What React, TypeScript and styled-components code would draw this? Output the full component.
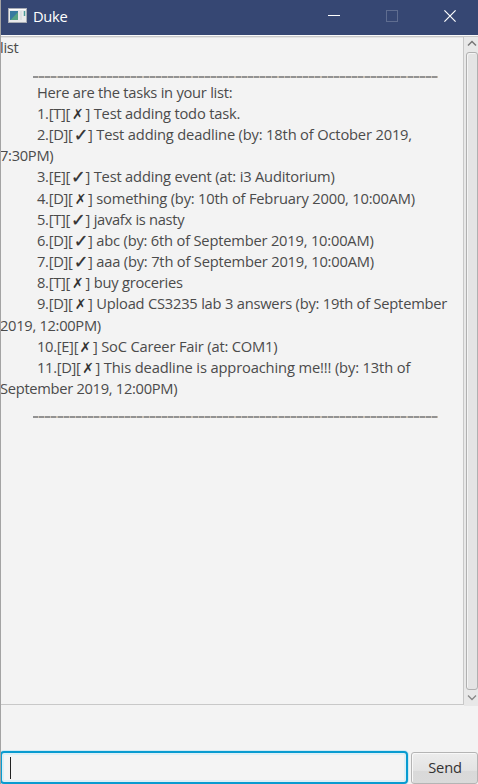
import React from 'react';
import styled, { createGlobalStyle } from 'styled-components';

const GlobalStyle = createGlobalStyle`
  * { box-sizing: border-box; }
  body { margin: 0; background: #f3f3f3; font-family: "Open Sans", "Noto Sans", sans-serif; }
`;

const Window = styled.div`
  width: 478px;
  height: 784px;
  display: flex;
  flex-direction: column;
  overflow: hidden;
  background: #f3f3f3;
  border-left: 1px solid #a3a3a3;
`;

const TitleBar = styled.header`
  height: 35px;
  flex: none;
  display: flex;
  align-items: center;
  margin-left: -1px;
  margin-right: -1px;
  padding-left: 8px;
  background: #364773;
  color: #fff;
`;

const AppIcon = styled.svg`
  flex: none;
  margin-bottom: 3px;
`;

const Title = styled.h1`
  flex: 1;
  margin: 0 0 0 6px;
  padding-bottom: 3px;
  font-size: 14.7px;
  font-weight: 400;
  line-height: 20px;
  letter-spacing: -0.3px;
`;

const WindowButton = styled.button<{ $dim?: boolean }>`
  width: 58px;
  height: 32px;
  margin-bottom: 3px;
  padding: 0;
  display: flex;
  align-items: center;
  justify-content: center;
  border: 0;
  background: none;
  color: ${p => (p.$dim ? '#5f6d90' : '#fff')};
`;

const ScrollPane = styled.main`
  height: 671px;
  flex: none;
  display: flex;
  border-top: 1px solid #fafafa;
`;

const Viewport = styled.div`
  flex: 1;
  min-width: 0;
  border: solid #c8c8c8;
  border-width: 1px 1px 1px 0;
  margin-bottom: 1px;
  box-shadow: inset 0 1px #e4e4e4;
`;

const ScrollBar = styled.div`
  width: 14px;
  flex: none;
  display: flex;
  flex-direction: column;
  align-items: flex-end;
  border-top: 1px solid #c8c8c8;
  background: #e8e8e8;
`;

const Arrow = styled.svg`
  flex: none;
  display: block;
`;

const Thumb = styled.div`
  width: 12px;
  height: 638px;
  border: 1px solid #b0b0b0;
  border-radius: 3px;
  background: #e4e4e4;
  box-shadow: inset 1px 1px #f4f4f4;
`;

const Line = styled.div<{ $track?: number; $indent?: boolean }>`
  height: 21.2px;
  display: flex;
  margin-left: -1px;
  padding-left: ${p => (p.$indent ? 37 : 0)}px;
  font-size: 14.7px;
  line-height: 21.2px;
  letter-spacing: ${p => p.$track ?? -0.3}px;
  white-space: pre;
  color: #4b4b4b;
`;

const Command = styled(Line)`
  margin-top: 0.3px;
`;

const Tag = styled.span<{ $width: number }>`
  width: ${p => p.$width}px;
  letter-spacing: -0.3px;
`;

const Mark = styled.span<{ $done?: boolean }>`
  width: 15px;
  display: flex;
  justify-content: center;
  margin-left: ${p => (p.$done ? -0.5 : -1)}px;
  margin-right: ${p => (p.$done ? 0.5 : 1)}px;
  padding-top: 1px;
  font-family: "DejaVu Sans", sans-serif;
  font-size: ${p => (p.$done ? 17.5 : 14)}px;
  letter-spacing: 0;
  color: #333;
  -webkit-text-stroke: ${p => (p.$done ? 0.3 : 0)}px #333;
`;

const Bracket = styled.span<{ $width: number }>`
  width: ${p => p.$width}px;
  margin-left: -1px;
`;

const Rule = styled.div<{ $top: number; $bottom: number }>`
  width: 405px;
  height: 2px;
  margin: ${p => p.$top}px 0 ${p => p.$bottom}px 32px;
  background: repeating-linear-gradient(90deg, #929292 0 5px, #c9bfb2 5px 6.14px);
`;

const InputBar = styled.form`
  flex: none;
  display: flex;
  gap: 3px;
  margin-top: 45px;
  margin-left: -1px;
`;

const Field = styled.div`
  width: 408px;
  height: 33px;
  padding: 4px 0 0 8px;
  border: 2px solid #089bd0;
  border-radius: 4px;
  background: #f4f4f4;
  box-shadow: inset 0 0 0 2px #dceff6, 0 0 0 1px #cfe9f3;
`;

const Caret = styled.div`
  width: 1px;
  height: 22px;
  background: #222;
`;

const SendButton = styled.button`
  flex: 1;
  height: 32px;
  margin-top: 1px;
  padding: 0 0 2px 1px;
  border: 1px solid #b4b4b4;
  border-radius: 3px;
  background: linear-gradient(#ececec, #e3e3e3 58%, #d9d9d9 60%, #dadada);
  box-shadow: inset 1px 1px #f8f8f8;
  color: #333;
  font: 14.7px "Open Sans", sans-serif;
  letter-spacing: -0.2px;
`;

type Task = {
  no: number;
  kind: 'T' | 'D' | 'E';
  done?: boolean;
  text: string;
  track?: number;
  rest?: string;
};

const tasks: Task[] = [
  { no: 1, kind: 'T', text: 'Test adding todo task.', track: -0.19 },
  { no: 2, kind: 'D', done: true, text: 'Test adding deadline (by: 18th of October 2019,', track: -0.17, rest: '7:30PM)' },
  { no: 3, kind: 'E', done: true, text: 'Test adding event (at: i3 Auditorium)', track: -0.19 },
  { no: 4, kind: 'D', text: 'something (by: 10th of February 2000, 10:00AM)', track: -0.2 },
  { no: 5, kind: 'T', done: true, text: 'javafx is nasty' },
  { no: 6, kind: 'D', done: true, text: 'abc (by: 6th of September 2019, 10:00AM)', track: -0.2 },
  { no: 7, kind: 'D', done: true, text: 'aaa (by: 7th of September 2019, 10:00AM)', track: -0.2 },
  { no: 8, kind: 'T', text: 'buy groceries', track: -0.24 },
  { no: 9, kind: 'D', text: 'Upload CS3235 lab 3 answers (by: 19th of September', track: -0.22, rest: '2019, 12:00PM)' },
  { no: 10, kind: 'E', text: 'SoC Career Fair (at: COM1)', track: -0.18 },
  { no: 11, kind: 'D', text: 'This deadline is approaching me!!! (by: 13th of', track: -0.14, rest: 'September 2019, 12:00PM)' },
];

const tagWidth = { T: 34.4, E: 34.4, D: 37 };

export default function App() {
  return (
    <>
      <GlobalStyle />
      <Window>
        <TitleBar>
          <AppIcon width="19" height="16" viewBox="0 0 19 16">
            <rect x=".5" y=".5" width="18" height="14" fill="#e9eaeb" stroke="#a9adb5" />
            <path d="M1 1.5h17" stroke="#fff" />
            <path d="M2 3h8v9H2z" fill="#377aa0" />
            <path d="M2.5 12 10 4v8z" fill="#55a284" />
            <path d="M12 3h2v9h-2z" fill="#dcdee1" />
            <path d="M16.5 3v5" stroke="#4c9b98" strokeWidth="1.5" />
          </AppIcon>
          <Title>Duke</Title>
          <WindowButton aria-label="Minimize">
            <svg width="12" height="12"><path d="M0 5.5h12" stroke="currentColor" /></svg>
          </WindowButton>
          <WindowButton aria-label="Maximize" $dim>
            <svg width="12" height="12"><rect x=".5" y=".5" width="11" height="11" fill="none" stroke="currentColor" /></svg>
          </WindowButton>
          <WindowButton aria-label="Close">
            <svg width="12" height="12"><path d="m.4.4 11.2 11.2m0-11.2L.4 11.6" stroke="currentColor" strokeWidth="1.2" /></svg>
          </WindowButton>
        </TitleBar>
        <ScrollPane>
          <Viewport>
            <Command>list</Command>
            <Rule $top={17.3} $bottom={3.8} />
            <Line $indent $track={-0.26}>Here are the tasks in your list:</Line>
            {tasks.map(t => (
              <React.Fragment key={t.no}>
                <Line $indent $track={t.track}>
                  <Tag $width={tagWidth[t.kind] + (t.no > 9 ? 7.5 : 0)}>{`${t.no}.[${t.kind}][`}</Tag>
                  <Mark $done={t.done}>{t.done ? '✓' : '✗'}</Mark>
                  <Bracket $width={8.3}>]</Bracket>
                  <span>{t.text}</span>
                </Line>
                {t.rest && <Line>{t.rest}</Line>}
              </React.Fragment>
            ))}
            <Rule $top={16.2} $bottom={0} />
          </Viewport>
          <ScrollBar>
            <Arrow width="13" height="15"><path d="m3 8.5 4-4 4 4" fill="none" stroke="#777" strokeWidth="1.5" /></Arrow>
            <Thumb />
            <Arrow width="13" height="15"><path d="m3 5.5 4 4 4-4" fill="none" stroke="#888" strokeWidth="1.3" /></Arrow>
          </ScrollBar>
        </ScrollPane>
        <InputBar>
          <Field><Caret /></Field>
          <SendButton type="button">Send</SendButton>
        </InputBar>
      </Window>
    </>
  );
}
